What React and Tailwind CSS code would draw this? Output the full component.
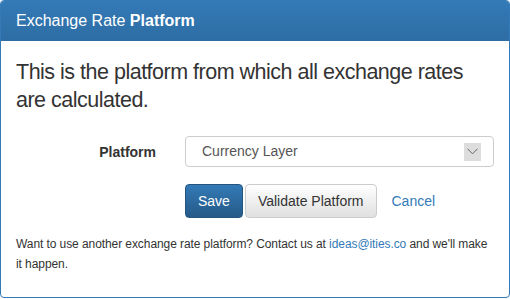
import React from "react";

export default function App() {
  return (
    <div className="w-[510px] h-[299px] bg-white" style={{ fontFamily: '"Liberation Sans", Arial, sans-serif' }}>
      <div className="w-[510px] h-[298px] border border-[#337ab7] rounded-[4px] overflow-hidden flex flex-col">
        <div className="h-[40px] shrink-0 flex items-center px-[15px] bg-gradient-to-b from-[#337ab7] to-[#2e6da4] text-white text-[16px] leading-[40px]">
          <span>
            Exchange Rate <span className="font-bold">Platform</span>
          </span>
        </div>
        <div className="px-[15px] pt-[17px] text-[#333]">
          <h3 className="text-[21.5px] tracking-[-0.5px] leading-[28px] m-0 font-normal">
            This is the platform from which all exchange rates are calculated.
          </h3>
          <div className="flex items-center mt-[22px]">
            <label className="w-[140px] text-right font-bold text-[14px] leading-[20px]">Platform</label>
            <div className="ml-[29px] flex-1 h-[31px] border border-[#ccc] rounded-[4px] flex items-center pl-[16px] pr-[12px] text-[14px] text-[#555]">
              <span className="flex-1">Currency Layer</span>
              <span className="w-[17px] h-[18px] bg-[#dddddd] flex items-center justify-center">
                <svg width="11" height="7" viewBox="0 0 11 7" fill="none">
                  <path d="M0.5 0.8 L5.5 5.8 L10.5 0.8" stroke="#666" strokeWidth="1" />
                </svg>
              </span>
            </div>
          </div>
          <div className="flex items-center mt-[17px] ml-[169px]">
            <button className="h-[34px] px-[12px] border border-[#245580] rounded-[4px] text-white text-[14px] leading-[20px] bg-gradient-to-b from-[#337ab7] to-[#265a88]">
              Save
            </button>
            <button className="ml-[2px] h-[34px] px-[12px] border border-[#ccc] rounded-[4px] text-[#333] text-[14px] leading-[20px] bg-gradient-to-b from-white to-[#e0e0e0]">
              Validate Platform
            </button>
            <a className="ml-[15px] text-[#337ab7] text-[14px] leading-[20px]">Cancel</a>
          </div>
          <p className="mt-[16px] text-[12px] tracking-[-0.08px] leading-[20px]">
            Want to use another exchange rate platform? Contact us at{" "}
            <a className="text-[#337ab7]">ideas@ities.co</a> and we'll make it happen.
          </p>
        </div>
      </div>
    </div>
  );
}
